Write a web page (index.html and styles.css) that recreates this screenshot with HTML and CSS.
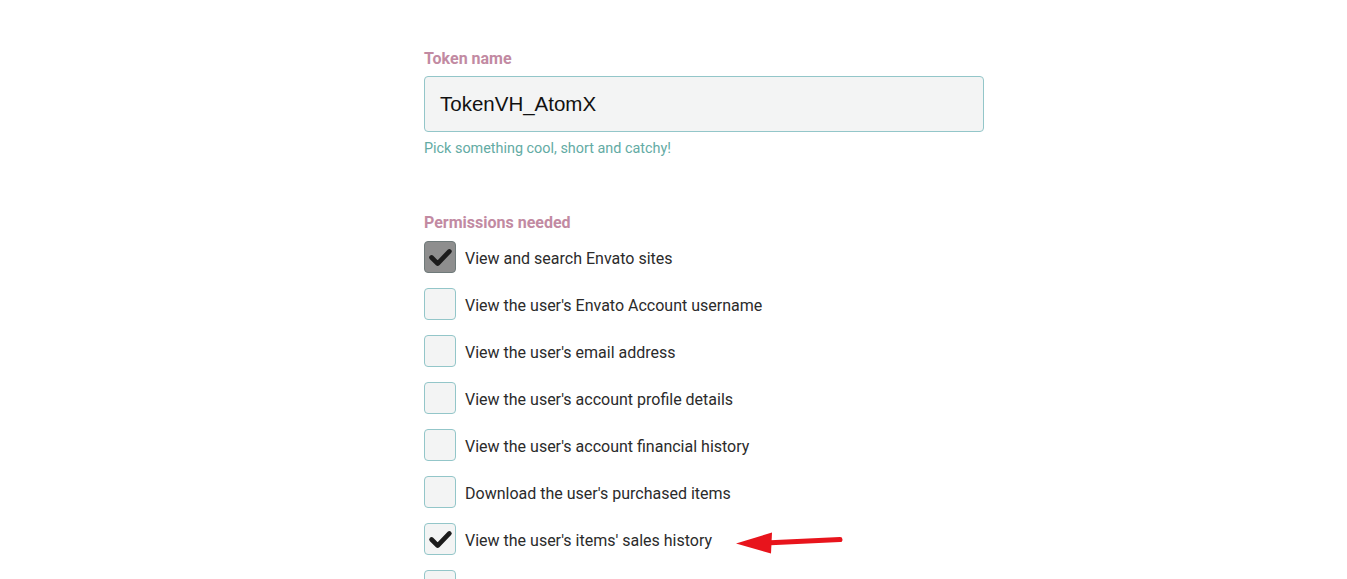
FILE: index.html
```html
<!DOCTYPE html>
<html>
<head>
<meta charset="utf-8">
<link rel="stylesheet" href="styles.css">
</head>
<body>
<div class="form">
  <div class="field">
    <label class="label">Token name</label>
    <div class="input">TokenVH_AtomX</div>
    <div class="help">Pick something cool, short and catchy!</div>
  </div>
  <div class="field perms">
    <div class="label">Permissions needed</div>
    <ul class="list">
      <li class="row"><span class="box box-dark"><svg viewBox="0 0 32 32" class="tick"><path d="M7 16.5 L13.5 23 L26 10"/></svg></span><span class="text">View and search Envato sites</span></li>
      <li class="row"><span class="box"></span><span class="text">View the user's Envato Account username</span></li>
      <li class="row"><span class="box"></span><span class="text">View the user's email address</span></li>
      <li class="row"><span class="box"></span><span class="text">View the user's account profile details</span></li>
      <li class="row"><span class="box"></span><span class="text">View the user's account financial history</span></li>
      <li class="row"><span class="box"></span><span class="text">Download the user's purchased items</span></li>
      <li class="row"><span class="box"><svg viewBox="0 0 32 32" class="tick"><path d="M7 16.5 L13.5 23 L26 10"/></svg></span><span class="text">View the user's items' sales history</span>
        <svg class="arrow" width="112" height="26" viewBox="0 0 112 26"><path class="shaft" d="M30 15 L105 11.5"/><polygon points="1,15.5 37,4.5 36,25.5" fill="#e8141c"/></svg>
      </li>
      <li class="row"><span class="box"></span></li>
    </ul>
  </div>
</div>
</body>
</html>
```
FILE: styles.css
```css
html, body {
  margin: 0;
  padding: 0;
  background: #ffffff;
  overflow: hidden;
  height: 579px;
}
body {
  font-family: Roboto, "Liberation Sans", sans-serif;
}
.form {
  width: 560px;
  margin-left: 424px;
  padding-top: 49px;
}
.label {
  display: block;
  font-size: 16px;
  line-height: 20px;
  font-weight: 700;
  color: #c28aa2;
}
.input {
  margin-top: 7px;
  box-sizing: border-box;
  height: 56px;
  border: 1px solid #93c6c9;
  border-radius: 4px;
  background: #f3f4f4;
  padding: 0 15px;
  display: flex;
  align-items: center;
  font-family: "Liberation Sans", Arial, sans-serif;
  font-size: 20.5px;
  color: #111;
}
.help {
  margin-top: 7px;
  font-size: 14.4px;
  line-height: 20px;
  color: #63aba4;
}
.perms {
  margin-top: 54px;
}
.list {
  list-style: none;
  margin: 8px 0 0 0;
  padding: 0;
  display: flex;
  flex-direction: column;
  gap: 15px;
}
.row {
  display: flex;
  align-items: center;
  height: 32px;
  gap: 9px;
}
.box {
  box-sizing: border-box;
  width: 32px;
  height: 32px;
  flex: none;
  border: 1px solid #93c6c9;
  border-radius: 4px;
  background: #f3f4f4;
  display: flex;
}
.box-dark {
  background: #8e8e8e;
  border-color: #6f7a7a;
}
.tick {
  width: 30px;
  height: 30px;
}
.tick path {
  fill: none;
  stroke: #1c1c1c;
  stroke-width: 5;
  stroke-linecap: round;
  stroke-linejoin: round;
}
.text {
  font-size: 16px;
  color: #2b2b2b;
  padding-top: 2px;
}
.arrow {
  margin-left: 14px;
  margin-top: 3px;
}
.shaft {
  stroke: #e8141c;
  stroke-width: 5;
  stroke-linecap: round;
  fill: none;
}
```
